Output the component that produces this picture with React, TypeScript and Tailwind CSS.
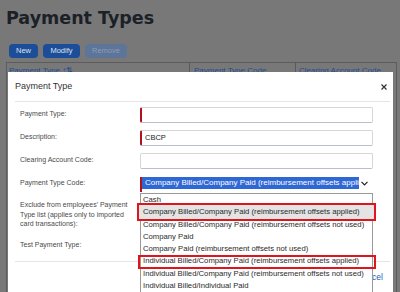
const options = [
  "Cash",
  "Company Billed/Company Paid (reimbursement offsets applied)",
  "Company Billed/Company Paid (reimbursement offsets not used)",
  "Company Paid",
  "Company Paid (reimbursement offsets not used)",
  "Individual Billed/Company Paid (reimbursement offsets applied)",
  "Individual Billed/Company Paid (reimbursement offsets not used)",
  "Individual Billed/Individual Paid",
];

const Label = ({ children }: { children: React.ReactNode }) => (
  <div className="w-[120px] shrink-0 pt-[2px] text-[7px] leading-[9.5px] text-[#4a4a4a]">{children}</div>
);

const Input = ({ required, value }: { required?: boolean; value?: string }) => (
  <div
    className={`flex h-[16px] w-[233px] items-center rounded-[2px] border border-[#d6d6d6] border-b-[#b9c0ca] pl-[3px] text-[7.5px] text-[#222] ${
      required ? "border-l-2 border-l-[#b3121c]" : ""
    }`}
  >
    {value}
  </div>
);

export default function App() {
  return (
    <div className="relative h-[292px] w-[400px] overflow-hidden bg-[#787878] font-['Liberation_Sans',Arial,sans-serif]">
      {/* page behind the dialog */}
      <h1 className="pl-[6px] pt-[8px] font-['DejaVu_Sans',sans-serif] text-[17.5px] font-bold leading-[20px] text-[#1c2027]">
        Payment Types
      </h1>
      <div className="mt-[16px] flex gap-[5px] pl-[9px]">
        <button className="h-[14px] w-[29px] rounded-[4px] bg-[#1b4d98] text-[7.5px] text-[#dde3ec]">New</button>
        <button className="h-[14px] w-[37px] rounded-[4px] bg-[#1b4d98] text-[7.5px] text-[#dde3ec]">Modify</button>
        <button className="h-[14px] w-[42px] rounded-[4px] bg-[#5c7599] text-[7.5px] text-[#8c9db8]">Remove</button>
      </div>
      <div className="ml-[6px] mr-[3px] mt-[4px] h-[240px] border-x border-t border-[#5c5c5c]">
        <div className="flex h-[12px] text-[8px] leading-[10px] text-[#1f4c91]">
          <div className="w-[183px] border-r border-[#5a5a5a] pl-[2px] pt-[3px]">Payment Type ↑⇅</div>
          <div className="w-[106px] border-r border-[#5a5a5a] pl-[4px] pt-[3px]">Payment Type Code</div>
          <div className="pl-[3px] pt-[3px]">Clearing Account Code</div>
        </div>
      </div>

      {/* dialog */}
      <div className="absolute left-[8px] top-[72px] h-[240px] w-[385px] bg-white">
        <div className="flex h-[29px] items-center justify-between pl-[7px] pr-[6px]">
          <span className="text-[9px] text-[#333]">Payment Type</span>
          <svg width="6" height="6" viewBox="0 0 6 6" className="text-[#333]">
            <path d="M0.5 0.5L5.5 5.5M5.5 0.5L0.5 5.5" stroke="currentColor" strokeWidth="1.2" />
          </svg>
        </div>
        <div className="ml-[7px] mr-[3px] h-px bg-[#e4e4e4]" />

        <div className="flex flex-col pl-[12px] pt-[5px]">
          <div className="flex">
            <Label>Payment Type:</Label>
            <Input required />
          </div>
          <div className="mt-[7px] flex">
            <Label>Description:</Label>
            <Input required value="CBCP" />
          </div>
          <div className="mt-[7px] flex">
            <Label>Clearing Account Code:</Label>
            <Input />
          </div>
          <div className="mt-[7px] flex h-[16px]">
            <Label>Payment Type Code:</Label>
            <div className="flex w-[233px] items-start pt-[1px]">
              <div className="h-[15px] border-l-2 border-[#b3121c]">
                <div className="h-[12px] w-[217px] overflow-hidden whitespace-nowrap bg-[#2f67d4] pl-[3px] text-[8px] leading-[12px] text-white">
                  {options[1]}
                </div>
              </div>
              <svg width="7" height="5" viewBox="0 0 7 5" className="ml-[2px] mt-[4px] text-[#222]">
                <path d="M0.5 0.8L3.5 3.8L6.5 0.8" fill="none" stroke="currentColor" strokeWidth="1.2" />
              </svg>
            </div>
          </div>
          <div className="mt-[8px] flex">
            <div className="w-[120px] text-[7px] leading-[9.5px] text-[#4a4a4a]">
              Exclude from employees' Payment
              <br />
              Type list (applies only to imported
              <br />
              card transactions):
            </div>
          </div>
          <div className="mt-[11px] flex">
            <div className="text-[7px] leading-[9.5px] text-[#4a4a4a]">Test Payment Type:</div>
          </div>
        </div>
        <div className="ml-[7px] mr-[3px] mt-[11.5px] h-px bg-[#e4e4e4]" />
        <div className="flex justify-end pr-[10px] pt-[10px]">
          <span className="text-[8.5px] leading-[10px] text-[#1a5fb4]">Cancel</span>
        </div>

        {/* open select list */}
        <div className="absolute left-[132px] top-[121px] h-[140px] w-[233px] border border-[#9a9a9a] bg-white">
          {options.map((o, i) => (
            <div key={o} className="relative whitespace-nowrap pl-[2px] text-[7.7px] leading-[12.3px] text-[#2a2a2a]">
              {i === 1 && (
                <span className="absolute -bottom-[2px] -left-[4px] -right-[4px] -top-[3px] border-2 border-[#e0141d] bg-[#e4e4e4]" />
              )}
              {i === 5 && (
                <span className="absolute -bottom-[1px] -left-[3px] -right-[4px] top-0 border-2 border-[#e0141d]" />
              )}
              <span className="relative">{o}</span>
            </div>
          ))}
        </div>
      </div>
    </div>
  );
}
